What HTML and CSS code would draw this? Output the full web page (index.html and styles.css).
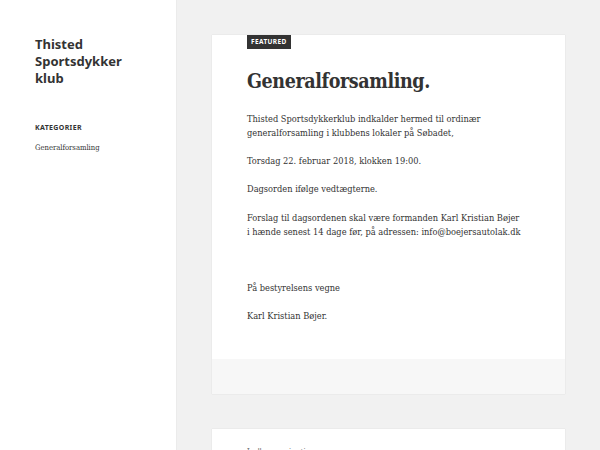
FILE: index.html
```html
<!DOCTYPE html>
<html lang="da">
<head>
<meta charset="utf-8">
<title>Thisted Sportsdykker klub</title>
<link rel="stylesheet" href="styles.css">
</head>
<body>
<div class="page">
  <aside class="sidebar">
    <p class="site-title">Thisted Sportsdykker klub</p>
    <h2 class="widget-title">Kategorier</h2>
    <ul class="cat-list">
      <li><a href="#">Generalforsamling</a></li>
    </ul>
  </aside>
  <main class="main">
    <article class="card">
      <div class="card-body">
        <span class="badge">Featured</span>
        <h1 class="entry-title">Generalforsamling.</h1>
        <div class="entry-content">
          <p>Thisted Sportsdykkerklub indkalder hermed til ordinær generalforsamling i klubbens lokaler på Søbadet,</p>
          <p>Torsdag 22. februar 2018, klokken 19:00.</p>
          <p>Dagsorden ifølge vedtægterne.</p>
          <p>Forslag til dagsordenen skal være formanden Karl Kristian Bøjer i hænde senest 14 dage før, på adressen: info@boejersautolak.dk</p>
          <p>&nbsp;</p>
          <p>På bestyrelsens vegne</p>
          <p>Karl Kristian Bøjer.</p>
        </div>
      </div>
      <footer class="card-footer"></footer>
    </article>
    <section class="card next">
      <p class="next-text">Indlæg navigation</p>
    </section>
  </main>
</div>
</body>
</html>
```
FILE: styles.css
```css
html, body {
  margin: 0;
  padding: 0;
}
body {
  background: #f1f1f1;
  height: 450px;
  overflow: hidden;
  color: #333;
}
.page {
  display: grid;
  grid-template-columns: 176px 1fr;
  min-height: 450px;
}
.sidebar {
  background: #fff;
  box-shadow: 0 0 1px rgba(0, 0, 0, 0.15);
  padding: 36px 20px 0 35px;
}
.site-title {
  margin: 0;
  font-family: "Noto Sans", sans-serif;
  font-weight: 700;
  font-size: 13px;
  line-height: 17px;
  color: #333;
  width: 100px;
}
.widget-title {
  margin: 35px 0 0;
  font-family: "Noto Sans", sans-serif;
  font-weight: 700;
  font-size: 7px;
  line-height: 12px;
  letter-spacing: 0.05em;
  text-transform: uppercase;
  color: #333;
}
.cat-list {
  list-style: none;
  margin: 2px 0 0;
  padding: 0;
}
.cat-list a {
  font-family: "DejaVu Serif Condensed", "DejaVu Serif", serif;
  font-size: 7.6px;
  line-height: 14px;
  color: #333;
  text-decoration: none;
}
.main {
  padding: 35px 35px 0 36px;
}
.card {
  background: #fff;
  box-shadow: 0 0 1px rgba(0, 0, 0, 0.15);
}
.card-body {
  padding: 0 42px 36px 35px;
}
.badge {
  display: block;
  width: max-content;
  background: #333;
  color: #fff;
  font-family: "Noto Sans", sans-serif;
  font-weight: 700;
  font-size: 6.5px;
  line-height: 14px;
  letter-spacing: 0.06em;
  text-transform: uppercase;
  padding: 0 4px;
}
.entry-title {
  margin: 20px 0 0;
  font-family: "DejaVu Serif Condensed", "DejaVu Serif", serif;
  font-weight: 700;
  font-size: 19.5px;
  line-height: 26px;
  letter-spacing: -0.4px;
  color: #333;
}
.entry-content {
  margin-top: 17px;
  font-family: "DejaVu Serif Condensed", "DejaVu Serif", serif;
  font-size: 9.2px;
  line-height: 14.1px;
  color: #333;
}
.entry-content p {
  margin: 0 0 14.1px;
}
.entry-content p:last-child {
  margin-bottom: 0;
}
.card-footer {
  background: #f7f7f7;
  height: 35px;
}
.next {
  margin-top: 35px;
  padding: 16px 35px;
}
.next-text {
  margin: 0;
  font-family: "Noto Sans", sans-serif;
  font-size: 8px;
  line-height: 14px;
  color: #707070;
}
```
